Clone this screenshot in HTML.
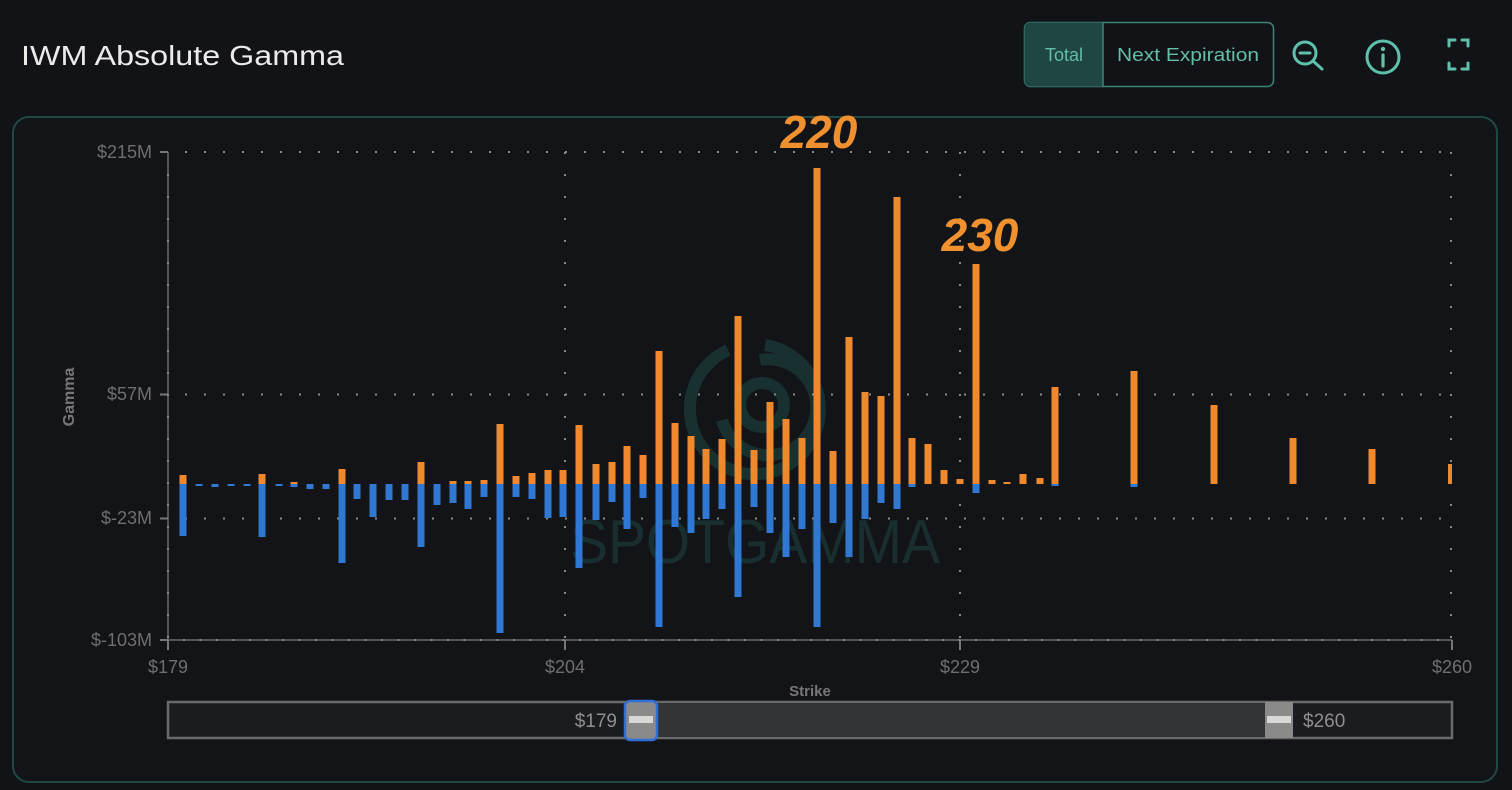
<!DOCTYPE html>
<html><head><meta charset="utf-8"><style>
html,body{margin:0;padding:0;background:#121317;}
svg{display:block;}
text{font-family:"Liberation Sans",Arial,sans-serif;}
</style></head><body>
<svg width="1512" height="790" viewBox="0 0 1512 790" xmlns="http://www.w3.org/2000/svg">
<rect width="1512" height="790" fill="#121317"/>
<text x="21" y="65" font-size="28" fill="#ebebeb" textLength="323" lengthAdjust="spacingAndGlyphs">IWM Absolute Gamma</text>
<rect x="1024.5" y="22.5" width="249" height="64" rx="6" fill="none" stroke="#3b8676" stroke-width="1.5"/>
<path d="M1030.5 22.5 H1103 V86.5 H1030.5 A6 6 0 0 1 1024.5 80.5 V28.5 A6 6 0 0 1 1030.5 22.5Z" fill="#1f4641"/>
<line x1="1103" y1="22.5" x2="1103" y2="86.5" stroke="#3b8676" stroke-width="1.5"/>
<text x="1064" y="61" font-size="18" fill="#63bda8" text-anchor="middle">Total</text>
<text x="1188" y="61" font-size="18" fill="#63bda8" text-anchor="middle" textLength="142" lengthAdjust="spacingAndGlyphs">Next Expiration</text>
<g stroke="#5ec1ab" stroke-width="3" fill="none" stroke-linecap="round">
<circle cx="1305" cy="53" r="11"/>
<line x1="1300" y1="53" x2="1310" y2="53"/>
<line x1="1313" y1="61" x2="1322" y2="69"/>
<circle cx="1383" cy="57" r="16"/>
<path d="M1449 46 V40 H1455 M1462 40 H1468 V46 M1468 63 V69 H1462 M1455 69 H1449 V63"/>
</g>
<circle cx="1383" cy="49" r="2.2" fill="#5ec1ab"/>
<line x1="1383" y1="55" x2="1383" y2="66" stroke="#5ec1ab" stroke-width="3.2" stroke-linecap="round"/>
<rect x="13" y="117" width="1484" height="665" rx="16" fill="#131418" stroke="#1f4a44" stroke-width="2"/>
<g opacity="0.55" stroke="#1d4744" stroke-width="12" fill="none">
<path d="M728 350 A65 65 0 1 0 765 345"/>
<path d="M760 360 A48 48 0 1 1 722 420"/>
<circle cx="762" cy="405" r="22"/>
</g>
<text x="570" y="563" font-size="62" fill="#1b3a39" opacity="0.7" textLength="370" lengthAdjust="spacingAndGlyphs">SPOTGAMMA</text>
<g stroke="#8a8a8a" stroke-width="2" stroke-dasharray="2 17" fill="none">
<line x1="166" y1="152" x2="1452" y2="152"/>
<line x1="166" y1="394.5" x2="1452" y2="394.5"/>
<line x1="166" y1="518.5" x2="1452" y2="518.5"/>
</g>
<g stroke="#8a8a8a" stroke-width="2" stroke-dasharray="2 20" fill="none">
<line x1="565" y1="152" x2="565" y2="640"/>
<line x1="960" y1="152" x2="960" y2="640"/>
<line x1="1451" y1="152" x2="1451" y2="640"/>
</g>
<line x1="168" y1="152" x2="168" y2="641" stroke="#555" stroke-width="2"/>
<line x1="168" y1="640" x2="1452" y2="640" stroke="#555" stroke-width="2"/>
<g stroke="#777" stroke-width="2">
<line x1="160" y1="152" x2="168" y2="152"/><line x1="160" y1="394.5" x2="168" y2="394.5"/><line x1="160" y1="518.5" x2="168" y2="518.5"/><line x1="160" y1="640" x2="168" y2="640"/>
<line x1="168" y1="640" x2="168" y2="650"/><line x1="565" y1="640" x2="565" y2="650"/><line x1="960" y1="640" x2="960" y2="650"/><line x1="1452" y1="640" x2="1452" y2="650"/>
</g>
<g stroke="#888" stroke-width="2" stroke-dasharray="2 20"><line x1="168" y1="174" x2="168" y2="640"/></g>
<g stroke="#888" stroke-width="2" stroke-dasharray="2 14.5"><line x1="183" y1="640" x2="1452" y2="640"/></g>
<g font-size="18" fill="#6f6f6f" text-anchor="end">
<text x="152" y="158">$215M</text>
<text x="152" y="400">$57M</text>
<text x="152" y="524">$-23M</text>
<text x="152" y="646">$-103M</text>
</g>
<g font-size="18" fill="#6f6f6f" text-anchor="middle">
<text x="168" y="673">$179</text>
<text x="565" y="673">$204</text>
<text x="960" y="673">$229</text>
<text x="1452" y="673">$260</text>
</g>
<text x="810" y="696" font-size="15" font-weight="bold" fill="#777" text-anchor="middle">Strike</text>
<text transform="translate(74 397) rotate(-90)" font-size="16" font-weight="bold" fill="#777" text-anchor="middle">Gamma</text>
<g fill="#f0892e">
<rect x="179.5" y="475" width="7" height="9"/>
<rect x="258.5" y="474" width="7" height="10"/>
<rect x="290.5" y="482" width="7" height="2"/>
<rect x="338.5" y="469" width="7" height="15"/>
<rect x="417.5" y="462" width="7" height="22"/>
<rect x="449.5" y="481" width="7" height="3"/>
<rect x="464.5" y="481" width="7" height="3"/>
<rect x="480.5" y="480" width="7" height="4"/>
<rect x="496.5" y="424" width="7" height="60"/>
<rect x="512.5" y="476" width="7" height="8"/>
<rect x="528.5" y="473" width="7" height="11"/>
<rect x="544.5" y="470" width="7" height="14"/>
<rect x="559.5" y="470" width="7" height="14"/>
<rect x="575.5" y="425" width="7" height="59"/>
<rect x="592.5" y="464" width="7" height="20"/>
<rect x="608.5" y="462" width="7" height="22"/>
<rect x="623.5" y="446" width="7" height="38"/>
<rect x="639.5" y="455" width="7" height="29"/>
<rect x="655.5" y="351" width="7" height="133"/>
<rect x="671.5" y="423" width="7" height="61"/>
<rect x="687.5" y="436" width="7" height="48"/>
<rect x="702.5" y="449" width="7" height="35"/>
<rect x="718.5" y="439" width="7" height="45"/>
<rect x="734.5" y="316" width="7" height="168"/>
<rect x="750.5" y="450" width="7" height="34"/>
<rect x="766.5" y="402" width="7" height="82"/>
<rect x="782.5" y="419" width="7" height="65"/>
<rect x="798.5" y="438" width="7" height="46"/>
<rect x="813.5" y="168" width="7" height="316"/>
<rect x="829.5" y="451" width="7" height="33"/>
<rect x="845.5" y="337" width="7" height="147"/>
<rect x="861.5" y="392" width="7" height="92"/>
<rect x="877.5" y="396" width="7" height="88"/>
<rect x="893.5" y="197" width="7" height="287"/>
<rect x="908.5" y="438" width="7" height="46"/>
<rect x="924.5" y="444" width="7" height="40"/>
<rect x="940.5" y="470" width="7" height="14"/>
<rect x="956.5" y="479" width="7" height="5"/>
<rect x="972.5" y="264" width="7" height="220"/>
<rect x="988.5" y="480" width="7" height="4"/>
<rect x="1003.5" y="482" width="7" height="2"/>
<rect x="1019.5" y="474" width="7" height="10"/>
<rect x="1036.5" y="478" width="7" height="6"/>
<rect x="1051.5" y="387" width="7" height="97"/>
<rect x="1130.5" y="371" width="7" height="113"/>
<rect x="1210.5" y="405" width="7" height="79"/>
<rect x="1289.5" y="438" width="7" height="46"/>
<rect x="1368.5" y="449" width="7" height="35"/>
<rect x="1448" y="464" width="4" height="20"/>
</g>
<g fill="#2f78d3">
<rect x="179.5" y="484" width="7" height="52"/>
<rect x="195.5" y="484" width="7" height="2"/>
<rect x="211.5" y="484" width="7" height="3"/>
<rect x="227.5" y="484" width="7" height="2"/>
<rect x="243.5" y="484" width="7" height="2"/>
<rect x="258.5" y="484" width="7" height="53"/>
<rect x="275.5" y="484" width="7" height="2"/>
<rect x="290.5" y="484" width="7" height="3"/>
<rect x="306.5" y="484" width="7" height="5"/>
<rect x="322.5" y="484" width="7" height="5"/>
<rect x="338.5" y="484" width="7" height="79"/>
<rect x="353.5" y="484" width="7" height="15"/>
<rect x="369.5" y="484" width="7" height="33"/>
<rect x="385.5" y="484" width="7" height="16"/>
<rect x="401.5" y="484" width="7" height="16"/>
<rect x="417.5" y="484" width="7" height="63"/>
<rect x="433.5" y="484" width="7" height="21"/>
<rect x="449.5" y="484" width="7" height="19"/>
<rect x="464.5" y="484" width="7" height="25"/>
<rect x="480.5" y="484" width="7" height="13"/>
<rect x="496.5" y="484" width="7" height="149"/>
<rect x="512.5" y="484" width="7" height="13"/>
<rect x="528.5" y="484" width="7" height="15"/>
<rect x="544.5" y="484" width="7" height="34"/>
<rect x="559.5" y="484" width="7" height="33"/>
<rect x="575.5" y="484" width="7" height="84"/>
<rect x="592.5" y="484" width="7" height="36"/>
<rect x="608.5" y="484" width="7" height="18"/>
<rect x="623.5" y="484" width="7" height="45"/>
<rect x="639.5" y="484" width="7" height="14"/>
<rect x="655.5" y="484" width="7" height="143"/>
<rect x="671.5" y="484" width="7" height="43"/>
<rect x="687.5" y="484" width="7" height="49"/>
<rect x="702.5" y="484" width="7" height="35"/>
<rect x="718.5" y="484" width="7" height="25"/>
<rect x="734.5" y="484" width="7" height="113"/>
<rect x="750.5" y="484" width="7" height="23"/>
<rect x="766.5" y="484" width="7" height="49"/>
<rect x="782.5" y="484" width="7" height="73"/>
<rect x="798.5" y="484" width="7" height="45"/>
<rect x="813.5" y="484" width="7" height="143"/>
<rect x="829.5" y="484" width="7" height="39"/>
<rect x="845.5" y="484" width="7" height="73"/>
<rect x="861.5" y="484" width="7" height="35"/>
<rect x="877.5" y="484" width="7" height="19"/>
<rect x="893.5" y="484" width="7" height="25"/>
<rect x="908.5" y="484" width="7" height="3"/>
<rect x="972.5" y="484" width="7" height="9"/>
<rect x="1051.5" y="484" width="7" height="2"/>
<rect x="1130.5" y="484" width="7" height="3"/>
</g>
<text x="819" y="148" font-size="46" font-weight="bold" font-style="italic" fill="#f0902f" text-anchor="middle">220</text>
<text x="980" y="251" font-size="46" font-weight="bold" font-style="italic" fill="#f0902f" text-anchor="middle">230</text>
<rect x="168" y="702" width="1284" height="36" fill="#1b1c20" stroke="#6a6a6a" stroke-width="2.5"/>
<rect x="641" y="703" width="640" height="34" fill="#333437"/>
<text x="617" y="727" font-size="19" fill="#8f8f8f" text-anchor="end">$179</text>
<text x="1303" y="727" font-size="19" fill="#8f8f8f">$260</text>
<rect x="625" y="701" width="32" height="39" rx="5" fill="#8a8a8a" stroke="#2f6fd6" stroke-width="2.5"/>
<rect x="629" y="716" width="24" height="7" fill="#d8d8d8"/>
<rect x="1265" y="702" width="28" height="36" fill="#8a8a8a"/>
<rect x="1267" y="716" width="24" height="7" fill="#d8d8d8"/>
</svg>
</body></html>
